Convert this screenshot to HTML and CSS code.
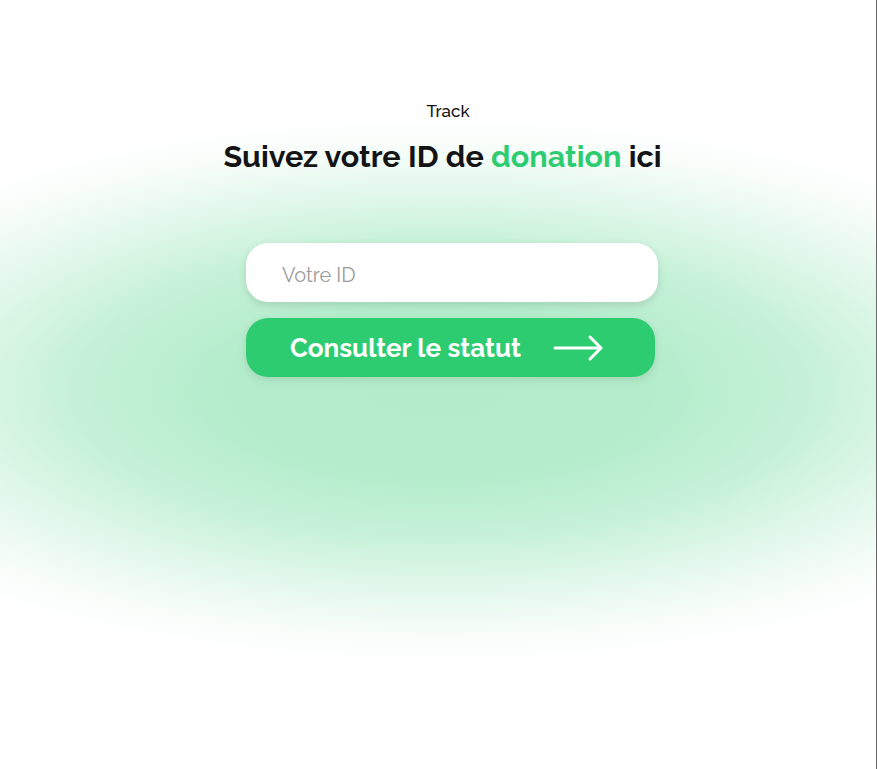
FILE: index.html
```html
<!DOCTYPE html>
<html lang="fr">
<head>
<meta charset="utf-8">
<title>Track</title>
<link rel="stylesheet" href="styles.css">
</head>
<body>
<main class="page">
  <section class="track">
    <p class="eyebrow">Track</p>
    <h1 class="title">Suivez votre ID de <span class="accent">donation</span> ici</h1>
    <form class="form">
      <input class="field" type="text" placeholder="Votre ID">
      <button class="btn" type="button">
        <span class="btn-label">Consulter le statut</span>
        <svg class="arrow" width="52" height="28" viewBox="0 0 52 28" aria-hidden="true">
          <path d="M2 14 H48 M37 3 L48 14 L37 25" fill="none" stroke="#fff" stroke-width="3" stroke-linecap="round" stroke-linejoin="round"/>
        </svg>
      </button>
    </form>
  </section>
</main>
</body>
</html>
```

FILE: styles.css
```css
* { box-sizing: border-box; }
html, body { margin: 0; padding: 0; height: 100%; background: #fff; }
body { font-family: "Raleway", "Lato", "Open Sans", sans-serif; }

.page {
  width: 877px;
  height: 769px;
  border-right: 1px solid #6a6a6a;
  background: radial-gradient(ellipse 700px 275px at 440px 390px,
    rgba(46, 204, 113, 0.37) 0%,
    rgba(46, 204, 113, 0.36) 30%,
    rgba(46, 204, 113, 0.28) 52%,
    rgba(46, 204, 113, 0.14) 72%,
    rgba(46, 204, 113, 0.04) 88%,
    rgba(46, 204, 113, 0) 100%);
  overflow: hidden;
}

.track {
  display: flex;
  flex-direction: column;
  align-items: center;
  padding-top: 101px;
}

.eyebrow {
  margin: 0 0 0 20px;
  font-size: 17px;
  font-weight: 500;
  line-height: 21px;
  color: #111;
}

.title {
  margin: 16px 0 0 9px;
  font-size: 30.5px;
  font-weight: 700;
  line-height: 36px;
  color: #141414;
}

.accent { color: #2ecc71; }

.form {
  margin-top: 69px;
  margin-left: 28px;
  display: flex;
  flex-direction: column;
  gap: 16px;
  width: 412px;
}

.field {
  width: 412px;
  height: 59px;
  border: none;
  outline: none;
  border-radius: 22px;
  background: #fff;
  padding: 5px 36px 0;
  font-family: inherit;
  font-size: 20px;
  color: #333;
  box-shadow: 0 3px 8px rgba(0, 0, 0, 0.12);
}
.field::placeholder { color: #9a9a9a; }

.btn {
  width: 409px;
  height: 59px;
  border: none;
  border-radius: 22px;
  background: #2ecc71;
  color: #fff;
  display: flex;
  align-items: center;
  padding: 0 0 0 44px;
  gap: 32px;
  font-family: inherit;
  font-size: 26px;
  font-weight: 700;
  box-shadow: 0 3px 8px rgba(0, 0, 0, 0.1);
  cursor: pointer;
}
.arrow { display: block; }
```
